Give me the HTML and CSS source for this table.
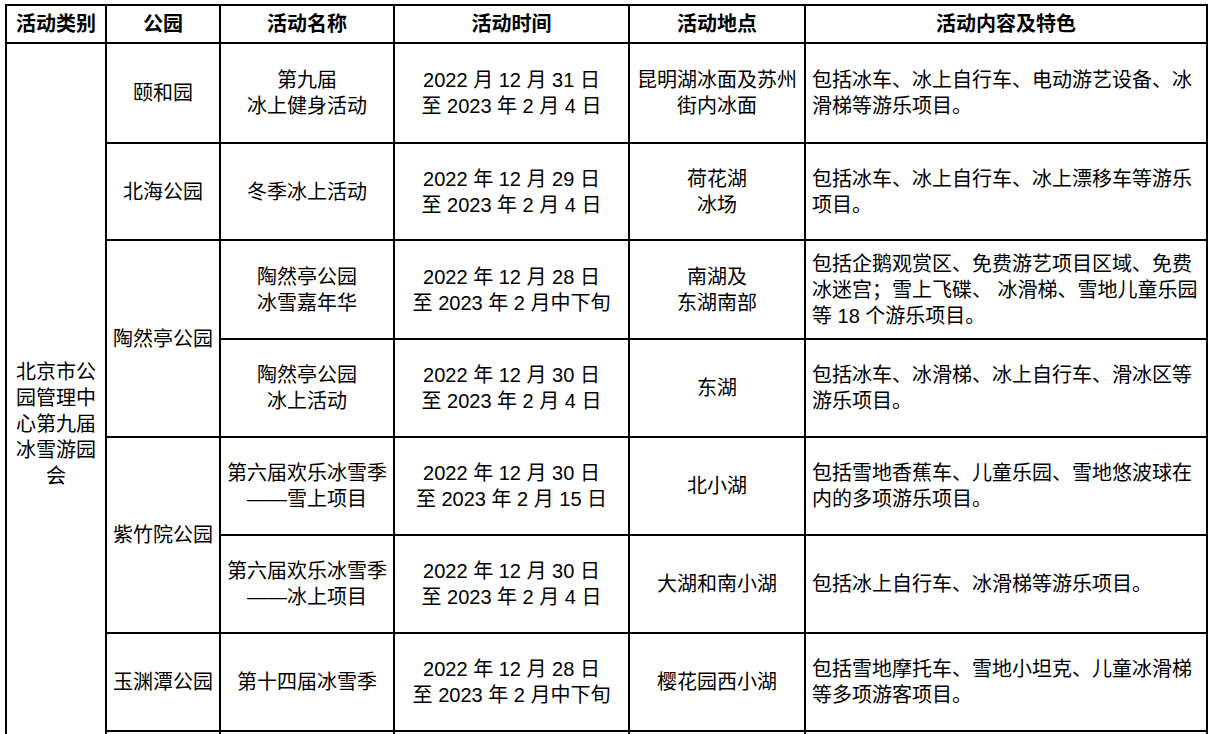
FILE: index.html
```html
<!DOCTYPE html>
<html lang="zh-CN">
<head>
<meta charset="utf-8">
<title>北京市公园管理中心第九届冰雪游园会</title>
<link rel="stylesheet" href="styles.css">
</head>
<body>
<table class="sheet">
  <colgroup>
    <col class="c-type">
    <col class="c-park">
    <col class="c-name">
    <col class="c-time">
    <col class="c-place">
    <col class="c-desc">
  </colgroup>
  <thead>
    <tr class="row-head">
      <th>活动类别</th>
      <th>公园</th>
      <th>活动名称</th>
      <th>活动时间</th>
      <th>活动地点</th>
      <th>活动内容及特色</th>
    </tr>
  </thead>
  <tbody>
    <tr class="row-100">
      <td rowspan="8" class="type">北京市公<br>园管理中<br>心第九届<br>冰雪游园<br>会</td>
      <td>颐和园</td>
      <td>第九届<br>冰上健身活动</td>
      <td>2022 月 12 月 31 日<br>至 2023 年 2 月 4 日</td>
      <td>昆明湖冰面及苏州<br>街内冰面</td>
      <td class="desc">包括冰车、冰上自行车、电动游艺设备、冰<br>滑梯等游乐项目。</td>
    </tr>
    <tr class="row-97">
      <td>北海公园</td>
      <td>冬季冰上活动</td>
      <td>2022 年 12 月 29 日<br>至 2023 年 2 月 4 日</td>
      <td>荷花湖<br>冰场</td>
      <td class="desc">包括冰车、冰上自行车、冰上漂移车等游乐<br>项目。</td>
    </tr>
    <tr class="row-99">
      <td rowspan="2">陶然亭公园</td>
      <td>陶然亭公园<br>冰雪嘉年华</td>
      <td>2022 年 12 月 28 日<br>至 2023 年 2 月中下旬</td>
      <td>南湖及<br>东湖南部</td>
      <td class="desc">包括企鹅观赏区、免费游艺项目区域、免费<br>冰迷宫；雪上飞碟、 冰滑梯、雪地儿童乐园<br>等 18 个游乐项目。</td>
    </tr>
    <tr class="row-98">
      <td>陶然亭公园<br>冰上活动</td>
      <td>2022 年 12 月 30 日<br>至 2023 年 2 月 4 日</td>
      <td>东湖</td>
      <td class="desc">包括冰车、冰滑梯、冰上自行车、滑冰区等<br>游乐项目。</td>
    </tr>
    <tr class="row-98">
      <td rowspan="2">紫竹院公园</td>
      <td>第六届欢乐冰雪季<br>——雪上项目</td>
      <td>2022 年 12 月 30 日<br>至 2023 年 2 月 15 日</td>
      <td>北小湖</td>
      <td class="desc">包括雪地香蕉车、儿童乐园、雪地悠波球在<br>内的多项游乐项目。</td>
    </tr>
    <tr class="row-98">
      <td>第六届欢乐冰雪季<br>——冰上项目</td>
      <td>2022 年 12 月 30 日<br>至 2023 年 2 月 4 日</td>
      <td>大湖和南小湖</td>
      <td class="desc">包括冰上自行车、冰滑梯等游乐项目。</td>
    </tr>
    <tr class="row-98">
      <td>玉渊潭公园</td>
      <td>第十四届冰雪季</td>
      <td>2022 年 12 月 28 日<br>至 2023 年 2 月中下旬</td>
      <td>樱花园西小湖</td>
      <td class="desc">包括雪地摩托车、雪地小坦克、儿童冰滑梯<br>等多项游客项目。</td>
    </tr>
    <tr class="row-74">
      <td></td>
      <td></td>
      <td></td>
      <td></td>
      <td class="desc"></td>
    </tr>
  </tbody>
</table>
</body>
</html>
```

FILE: styles.css
```css
html {
  overflow: hidden;
  background: #fff;
}

body {
  margin: 0;
  padding: 4px 0 0 5px;
  background: #fff;
  color: #000;
  font-family: "Liberation Sans", "Noto Sans CJK SC", sans-serif;
  font-size: 20px;
  line-height: 26px;
}

.sheet {
  border-collapse: collapse;
  table-layout: fixed;
  width: 1203px;
}

.c-type { width: 100px; }
.c-park { width: 114px; }
.c-name { width: 174px; }
.c-time { width: 235px; }
.c-place { width: 176px; }
.c-desc { width: 402px; }

.sheet th,
.sheet td {
  border: 2px solid #000;
  padding: 0 2px;
  text-align: center;
  vertical-align: middle;
  white-space: nowrap;
  overflow: hidden;
}

.sheet th {
  font-weight: 700;
}

.sheet td.desc {
  text-align: left;
  padding: 0 4px 0 6px;
}

.row-head { height: 38px; }
.row-100 { height: 100px; }
.row-97 { height: 97px; }
.row-99 { height: 99px; }
.row-98 { height: 98px; }
.row-74 { height: 74px; }
```
